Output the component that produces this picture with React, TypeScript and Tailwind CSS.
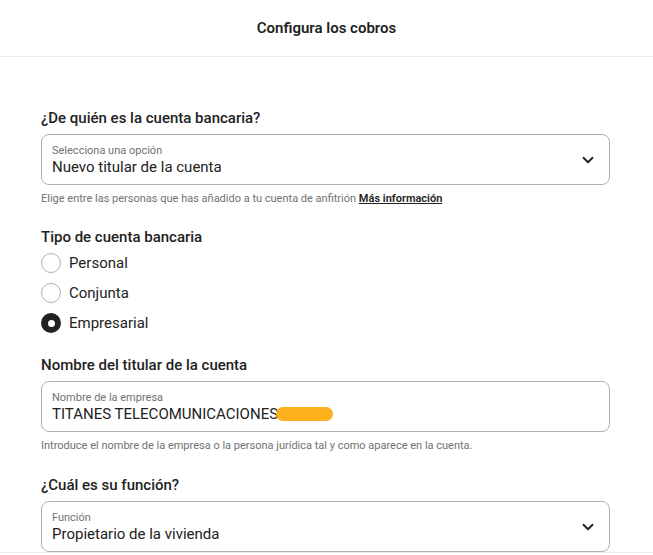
import { ChevronDown } from "lucide-react"

const font = { fontFamily: "Roboto, 'Noto Sans', sans-serif" }

const SelectBox = ({ label, value }: { label: string; value: string }) => (
  <div className="flex h-[51px] items-center justify-between rounded-lg border border-[#b0b0b0] pl-[10px] pr-[12px]">
    <div className="flex flex-col">
      <span className="text-[11px] leading-[14px] text-[#717171]">{label}</span>
      <span className="text-[15px] leading-[18px] text-[#222222]">{value}</span>
    </div>
    <ChevronDown className="h-[18px] w-[18px] text-[#222222]" strokeWidth={2.5} />
  </div>
)

const Radio = ({ label, checked }: { label: string; checked?: boolean }) => (
  <div className="flex h-[30px] items-center gap-2">
    {checked ? (
      <span className="flex h-5 w-5 items-center justify-center rounded-full bg-[#222222]">
        <span className="h-[7px] w-[7px] rounded-full bg-white" />
      </span>
    ) : (
      <span className="h-5 w-5 rounded-full border border-[#b0b0b0]" />
    )}
    <span className="text-[15px] text-[#222222]">{label}</span>
  </div>
)

export default function App() {
  return (
    <div className="min-h-screen bg-white" style={font}>
      <header className="flex h-[57px] items-center justify-center border-b border-[#ebebeb]">
        <h1 className="text-[15px] font-semibold text-[#222222]">Configura los cobros</h1>
      </header>
      <main className="mx-[41px] w-[569px] pt-[51px] text-[#222222]">
        <h2 className="mb-[6px] text-[15px] font-medium leading-[20px]">¿De quién es la cuenta bancaria?</h2>
        <SelectBox label="Selecciona una opción" value="Nuevo titular de la cuenta" />
        <p className="mt-[6px] text-[11px] leading-[16px] text-[#717171]">
          Elige entre las personas que has añadido a tu cuenta de anfitrión{" "}
          <span className="font-semibold text-[#222222] underline">Más información</span>
        </p>

        <h2 className="mt-[20px] text-[15px] font-medium leading-[20px]">Tipo de cuenta bancaria</h2>
        <div className="mt-[1px] flex flex-col">
          <Radio label="Personal" />
          <Radio label="Conjunta" />
          <Radio label="Empresarial" checked />
        </div>

        <h2 className="mb-[6px] mt-[17px] text-[15px] font-medium leading-[20px]">Nombre del titular de la cuenta</h2>
        <div className="flex h-[51px] flex-col justify-center rounded-lg border border-[#b0b0b0] px-[10px]">
          <span className="text-[11px] leading-[14px] text-[#717171]">Nombre de la empresa</span>
          <span className="flex items-center text-[15px] leading-[18px]">
            TITANES TELECOMUNICACIONES
            <span className="-ml-[2px] inline-block h-[14px] w-[57px] rounded-full bg-[#fdb01c]" />
          </span>
        </div>
        <p className="mt-[6px] text-[11px] leading-[16px] text-[#717171]">
          Introduce el nombre de la empresa o la persona jurídica tal y como aparece en la cuenta.
        </p>

        <h2 className="mb-[6px] mt-[21px] text-[15px] font-medium leading-[20px]">¿Cuál es su función?</h2>
        <SelectBox label="Función" value="Propietario de la vivienda" />
      </main>
      <div className="border-t border-[#ebebeb]" />
    </div>
  )
}
